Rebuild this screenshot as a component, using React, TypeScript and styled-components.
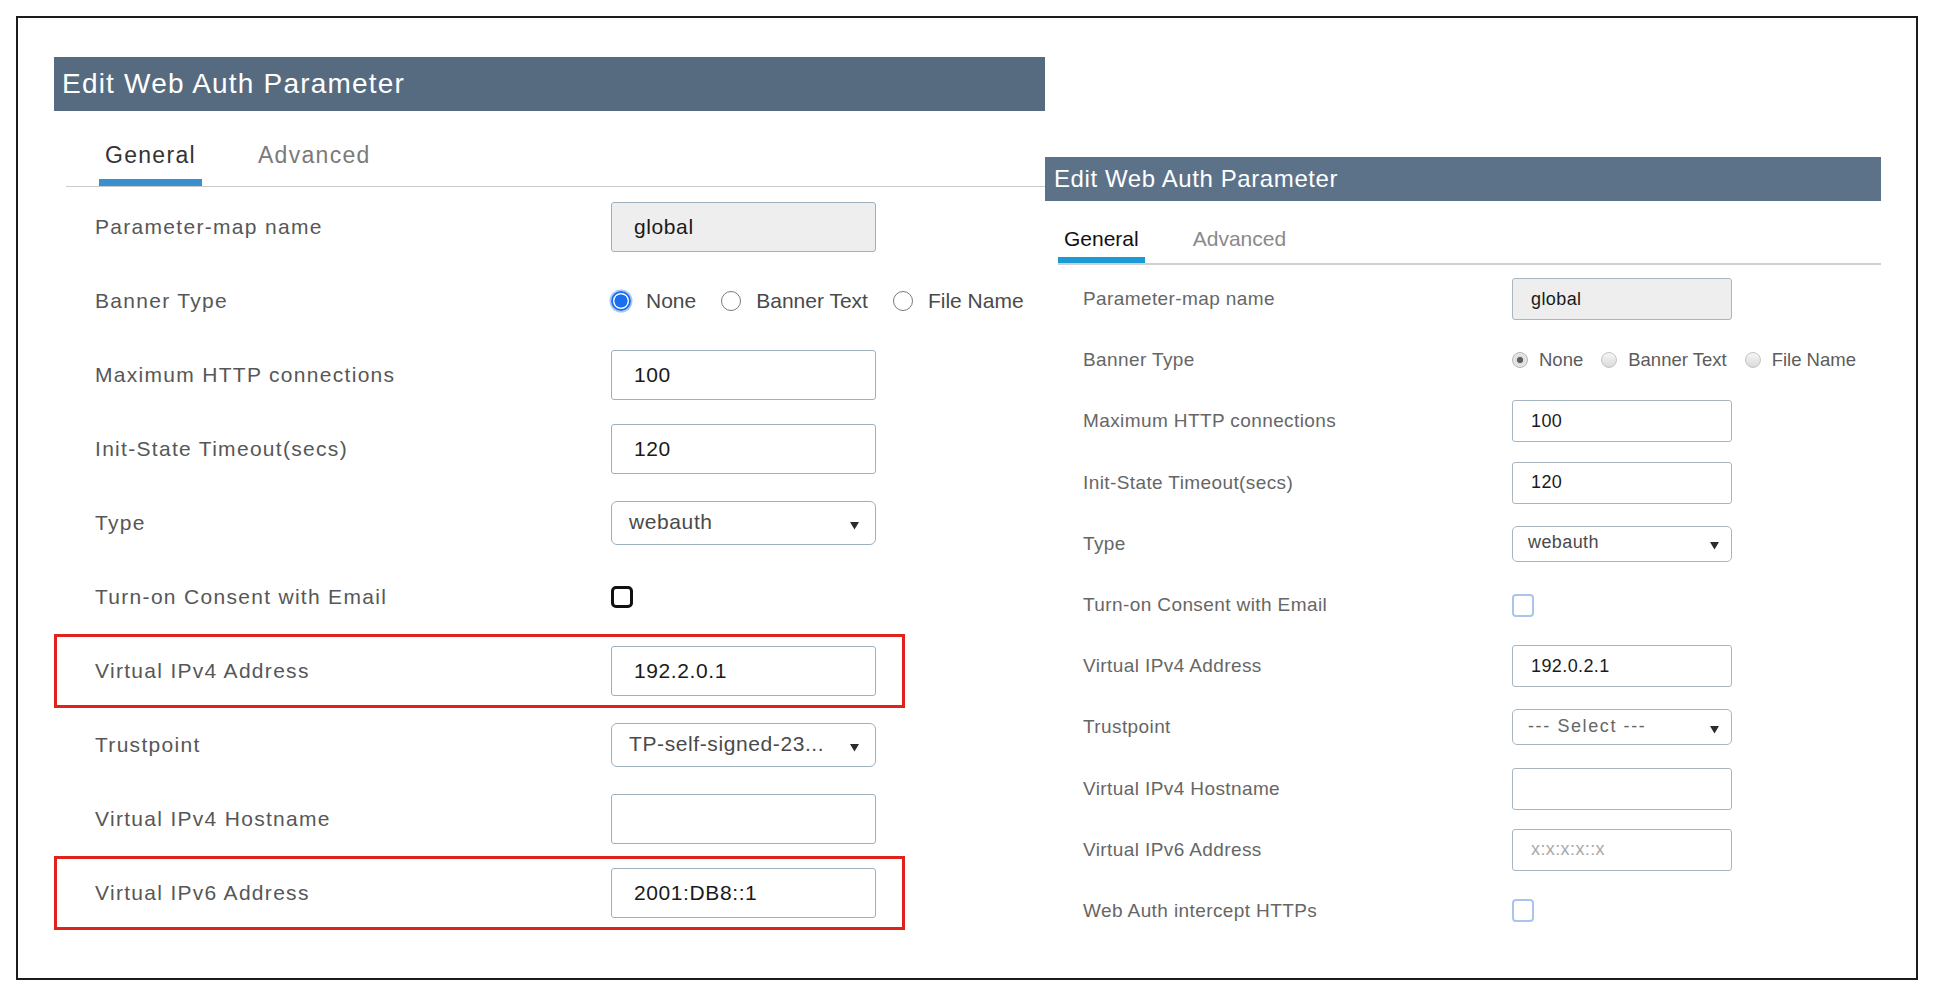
import React from "react";
import styled, { createGlobalStyle, css } from "styled-components";

type Size = "lg" | "sm";

const m = {
  lg: {
    panelW: 991,
    offset: 0,
    headH: 54,
    headBg: "#566b80",
    headFs: 28,
    headLs: 1.2,
    headPad: 8,
    tabMl: 12,
    tabPl: 33,
    tabGap: 50,
    tabH: 76,
    tabLine: "1.5px solid #cbcbcb",
    tabFs: 23,
    tabLs: 1.3,
    tabPt: 31,
    tabLh: 26,
    tabBar: "7px solid #3a8fcf",
    tabOn: "#333",
    tabOff: "#7a7a7a",
    rowsPt: 3,
    rowH: 74,
    rowW: 851,
    labelPad: 41,
    labelW: 516,
    labelFs: 21,
    labelLs: 1.3,
    labelColor: "#575757",
    inputW: 265,
    inputH: 50,
    selectH: 44,
    border: "1.5px solid #9fb0bd",
    radius: 3,
    selRadius: 6,
    valueFs: 21,
    valueLs: 0.6,
    valuePad: 22,
    selPad: 17,
    selRight: 16,
    radio: 20,
    radioGap: 15,
    optGap: 25,
    radioFs: 21,
  },
  sm: {
    panelW: 836,
    offset: 100,
    headH: 44,
    headBg: "#5b7289",
    headFs: 24,
    headLs: 0.6,
    headPad: 9,
    tabMl: 13,
    tabPl: 0,
    tabGap: 42,
    tabH: 64,
    tabLine: "2px solid #cfcfcf",
    tabFs: 21,
    tabLs: 0,
    tabPt: 26,
    tabLh: 24,
    tabBar: "6px solid #1c9ad6",
    tabOn: "#111",
    tabOff: "#8a8a8a",
    rowsPt: 3.5,
    rowH: 61.2,
    rowW: 836,
    labelPad: 38,
    labelW: 429,
    labelFs: 19,
    labelLs: 0.4,
    labelColor: "#666",
    inputW: 220,
    inputH: 42,
    selectH: 36,
    border: "1.5px solid #a8b6c2",
    radius: 3,
    selRadius: 5,
    valueFs: 18,
    valueLs: 0.4,
    valuePad: 18,
    selPad: 15,
    selRight: 12,
    radio: 16,
    radioGap: 11,
    optGap: 18,
    radioFs: 18.5,
  },
};

type Field =
  | { label: string; kind: "input" | "readonly"; value?: string; placeholder?: string; mark?: boolean }
  | { label: string; kind: "select"; value: string; muted?: boolean; mark?: boolean }
  | { label: string; kind: "radio"; options: string[]; mark?: boolean }
  | { label: string; kind: "check"; mark?: boolean };

const leftFields: Field[] = [
  { label: "Parameter-map name", kind: "readonly", value: "global" },
  { label: "Banner Type", kind: "radio", options: ["None", "Banner Text", "File Name"] },
  { label: "Maximum HTTP connections", kind: "input", value: "100" },
  { label: "Init-State Timeout(secs)", kind: "input", value: "120" },
  { label: "Type", kind: "select", value: "webauth" },
  { label: "Turn-on Consent with Email", kind: "check" },
  { label: "Virtual IPv4 Address", kind: "input", value: "192.2.0.1", mark: true },
  { label: "Trustpoint", kind: "select", value: "TP-self-signed-23..." },
  { label: "Virtual IPv4 Hostname", kind: "input" },
  { label: "Virtual IPv6 Address", kind: "input", value: "2001:DB8::1", mark: true },
];

const rightFields: Field[] = [
  { label: "Parameter-map name", kind: "readonly", value: "global" },
  { label: "Banner Type", kind: "radio", options: ["None", "Banner Text", "File Name"] },
  { label: "Maximum HTTP connections", kind: "input", value: "100" },
  { label: "Init-State Timeout(secs)", kind: "input", value: "120" },
  { label: "Type", kind: "select", value: "webauth" },
  { label: "Turn-on Consent with Email", kind: "check" },
  { label: "Virtual IPv4 Address", kind: "input", value: "192.0.2.1" },
  { label: "Trustpoint", kind: "select", value: "--- Select ---", muted: true },
  { label: "Virtual IPv4 Hostname", kind: "input" },
  { label: "Virtual IPv6 Address", kind: "input", placeholder: "x:x:x:x::x" },
  { label: "Web Auth intercept HTTPs", kind: "check" },
];

const GlobalStyle = createGlobalStyle`
  body {
    margin: 0;
    background: #fff;
    font-family: "Liberation Sans", Arial, sans-serif;
  }
`;

const Frame = styled.div`
  box-sizing: border-box;
  width: 1902px;
  height: 964px;
  margin: 16px 0 0 16px;
  border: 2px solid #1c1c1c;
  display: flex;
  align-items: flex-start;
  padding: 39px 0 0 36px;
`;

const Panel = styled.section<{ $size: Size }>`
  width: ${(p) => m[p.$size].panelW}px;
  margin-top: ${(p) => m[p.$size].offset}px;
  flex: none;
`;

const Header = styled.div<{ $size: Size }>`
  height: ${(p) => m[p.$size].headH}px;
  background: ${(p) => m[p.$size].headBg};
  color: #fff;
  font-size: ${(p) => m[p.$size].headFs}px;
  letter-spacing: ${(p) => m[p.$size].headLs}px;
  padding-left: ${(p) => m[p.$size].headPad}px;
  display: flex;
  align-items: center;
`;

const TabBar = styled.div<{ $size: Size }>`
  box-sizing: border-box;
  display: flex;
  gap: ${(p) => m[p.$size].tabGap}px;
  height: ${(p) => m[p.$size].tabH}px;
  margin-left: ${(p) => m[p.$size].tabMl}px;
  padding-left: ${(p) => m[p.$size].tabPl}px;
  border-bottom: ${(p) => m[p.$size].tabLine};
`;

const Tab = styled.div<{ $size: Size; $active?: boolean }>`
  box-sizing: border-box;
  height: 100%;
  padding: ${(p) => m[p.$size].tabPt}px 6px 0;
  font-size: ${(p) => m[p.$size].tabFs}px;
  line-height: ${(p) => m[p.$size].tabLh}px;
  letter-spacing: ${(p) => m[p.$size].tabLs}px;
  color: ${(p) => (p.$active ? m[p.$size].tabOn : m[p.$size].tabOff)};
  border-bottom: ${(p) => (p.$active ? m[p.$size].tabBar : "0 solid transparent")};
`;

const Rows = styled.div<{ $size: Size }>`
  padding-top: ${(p) => m[p.$size].rowsPt}px;
`;

const Row = styled.div<{ $size: Size; $mark?: boolean }>`
  box-sizing: border-box;
  display: flex;
  align-items: center;
  width: ${(p) => m[p.$size].rowW}px;
  height: ${(p) => m[p.$size].rowH}px;
  padding-left: ${(p) => m[p.$size].labelPad}px;
  ${(p) =>
    p.$mark &&
    css`
      box-shadow: inset 0 0 0 3px #e0221e;
    `}
`;

const Label = styled.div<{ $size: Size }>`
  flex: none;
  width: ${(p) => m[p.$size].labelW}px;
  font-size: ${(p) => m[p.$size].labelFs}px;
  letter-spacing: ${(p) => m[p.$size].labelLs}px;
  color: ${(p) => m[p.$size].labelColor};
  white-space: nowrap;
`;

const TextBox = styled.div<{ $size: Size; $readonly?: boolean }>`
  box-sizing: border-box;
  width: ${(p) => m[p.$size].inputW}px;
  height: ${(p) => m[p.$size].inputH}px;
  border: ${(p) => m[p.$size].border};
  border-radius: ${(p) => m[p.$size].radius}px;
  background: ${(p) => (p.$readonly ? "#eeeeee" : "#fff")};
  display: flex;
  align-items: center;
  padding-left: ${(p) => m[p.$size].valuePad}px;
  font-size: ${(p) => m[p.$size].valueFs}px;
  letter-spacing: ${(p) => m[p.$size].valueLs}px;
  color: #1a1a1a;
  white-space: nowrap;
`;

const Placeholder = styled.span`
  color: #a9a9a9;
`;

const SelectBox = styled.div<{ $size: Size; $muted?: boolean }>`
  box-sizing: border-box;
  width: ${(p) => m[p.$size].inputW}px;
  height: ${(p) => m[p.$size].selectH}px;
  border: ${(p) => m[p.$size].border};
  border-radius: ${(p) => m[p.$size].selRadius}px;
  background: #fff;
  display: flex;
  align-items: center;
  justify-content: space-between;
  padding: 0 ${(p) => m[p.$size].selRight}px 2px ${(p) => m[p.$size].selPad}px;
  font-size: ${(p) => m[p.$size].valueFs}px;
  letter-spacing: ${(p) => (p.$muted ? 1.6 : m[p.$size].valueLs)}px;
  color: ${(p) => (p.$muted ? "#666" : "#4a4a4a")};
  white-space: nowrap;

  svg {
    flex: none;
    margin-top: 6px;
  }
`;

const Options = styled.div<{ $size: Size }>`
  display: flex;
  align-items: center;
  gap: ${(p) => m[p.$size].optGap}px;
`;

const Option = styled.label<{ $size: Size }>`
  display: flex;
  align-items: center;
  gap: ${(p) => m[p.$size].radioGap}px;
  font-size: ${(p) => m[p.$size].radioFs}px;
  color: ${(p) => (p.$size === "lg" ? "#4a4a4a" : "#5c5c5c")};
  white-space: nowrap;
`;

const Radio = styled.span<{ $size: Size; $on?: boolean }>`
  box-sizing: border-box;
  flex: none;
  width: ${(p) => m[p.$size].radio}px;
  height: ${(p) => m[p.$size].radio}px;
  border-radius: 50%;
  ${(p) =>
    p.$size === "lg"
      ? p.$on
        ? css`
            border: 2px solid #1a6ef0;
            background: radial-gradient(circle, #1a6ef0 0 56%, #fff 60%);
            box-shadow: 0 0 0 1.5px #a9c7f7;
          `
        : css`
            border: 1.5px solid #7a7a7a;
            background: #fff;
          `
      : p.$on
      ? css`
          border: 1px solid #b4b4b4;
          background: radial-gradient(circle, #5e5e5e 0 28%, #dcdcdc 34%, #f2f2f2 100%);
        `
      : css`
          border: 1px solid #c4c4c4;
          background: linear-gradient(#f6f6f6, #dadada);
        `}
`;

const Check = styled.span<{ $size: Size }>`
  box-sizing: border-box;
  display: block;
  ${(p) =>
    p.$size === "lg"
      ? css`
          width: 22px;
          height: 22px;
          border: 3.5px solid #111;
          border-radius: 5px;
        `
      : css`
          width: 22px;
          height: 23px;
          border: 2px solid #a9c5ef;
          border-radius: 4px;
        `}
`;

const Caret: React.FC = () => (
  <svg width="9" height="9" viewBox="0 0 9 9">
    <polygon points="0,1 9,1 4.5,8.5" fill="#2b2b2b" />
  </svg>
);

const Control: React.FC<{ field: Field; size: Size }> = ({ field, size }) => {
  switch (field.kind) {
    case "radio":
      return (
        <Options $size={size}>
          {field.options.map((o, i) => (
            <Option key={o} $size={size}>
              <Radio $size={size} $on={i === 0} />
              {o}
            </Option>
          ))}
        </Options>
      );
    case "check":
      return <Check $size={size} />;
    case "select":
      return (
        <SelectBox $size={size} $muted={field.muted}>
          <span>{field.value}</span>
          <Caret />
        </SelectBox>
      );
    default:
      return (
        <TextBox $size={size} $readonly={field.kind === "readonly"}>
          {field.value ?? (field.placeholder && <Placeholder>{field.placeholder}</Placeholder>)}
        </TextBox>
      );
  }
};

const AuthDialog: React.FC<{ size: Size; fields: Field[] }> = ({ size, fields }) => (
  <Panel $size={size}>
    <Header $size={size}>Edit Web Auth Parameter</Header>
    <TabBar $size={size}>
      <Tab $size={size} $active>
        General
      </Tab>
      <Tab $size={size}>Advanced</Tab>
    </TabBar>
    <Rows $size={size}>
      {fields.map((f) => (
        <Row key={f.label} $size={size} $mark={f.mark}>
          <Label $size={size}>{f.label}</Label>
          <Control field={f} size={size} />
        </Row>
      ))}
    </Rows>
  </Panel>
);

const App: React.FC = () => (
  <>
    <GlobalStyle />
    <Frame>
      <AuthDialog size="lg" fields={leftFields} />
      <AuthDialog size="sm" fields={rightFields} />
    </Frame>
  </>
);

export default App;
